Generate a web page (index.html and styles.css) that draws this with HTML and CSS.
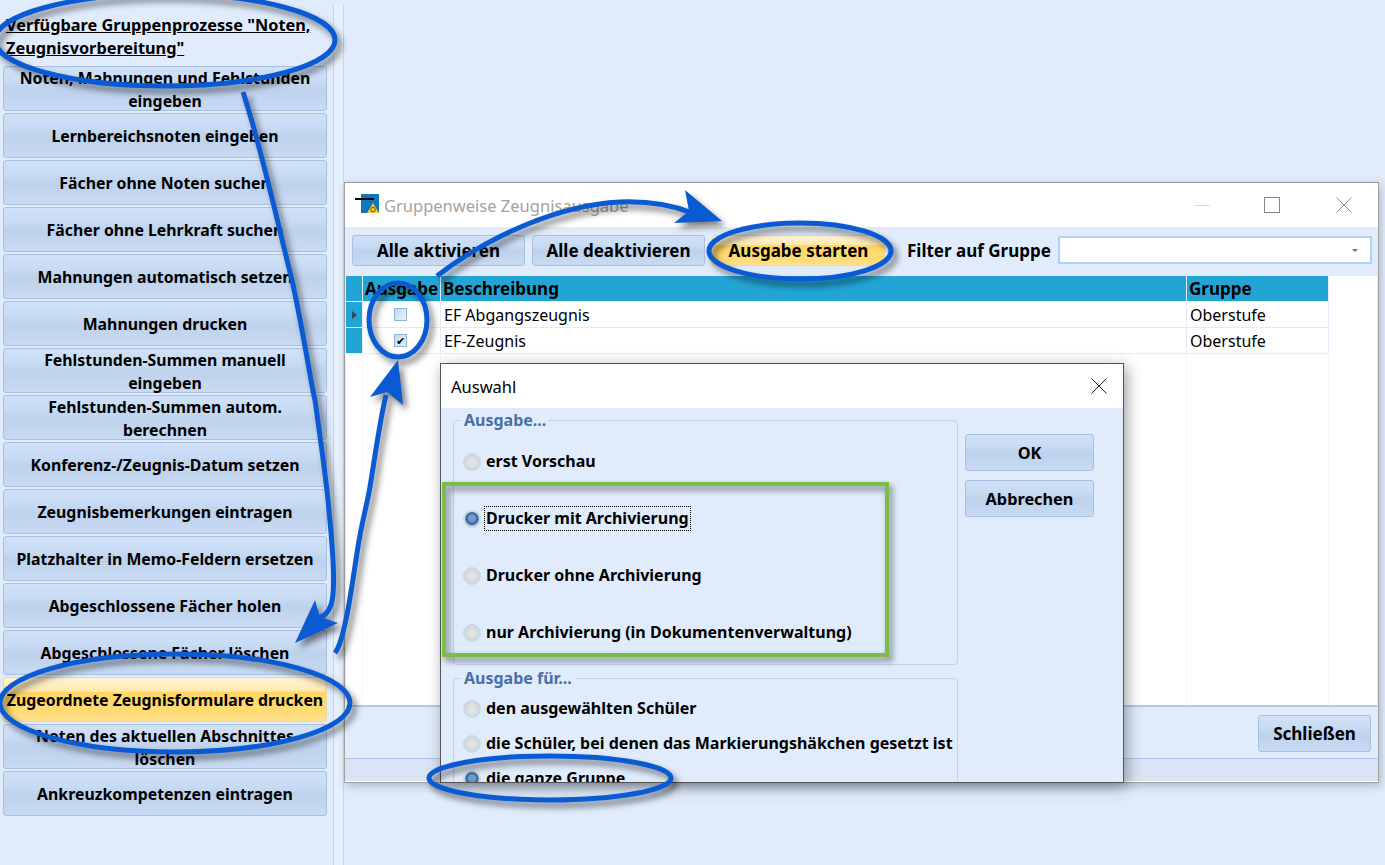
FILE: index.html
```html
<!DOCTYPE html>
<html lang="de">
<head>
  <meta charset="UTF-8">
  <title>Gruppenweise Zeugnisausgabe</title>
  <link rel="stylesheet" href="styles.css">
</head>
<body>

  <aside class="sidebar">
    <h2 class="side-title">Verfügbare Gruppenprozesse "Noten, Zeugnisvorbereitung"</h2>
    <div class="side-list">
      <button class="btn side-btn two-line">Noten, Mahnungen und Fehlstunden<br>eingeben</button>
      <button class="btn side-btn">Lernbereichsnoten eingeben</button>
      <button class="btn side-btn">Fächer ohne Noten suchen</button>
      <button class="btn side-btn">Fächer ohne Lehrkraft suchen</button>
      <button class="btn side-btn">Mahnungen automatisch setzen</button>
      <button class="btn side-btn">Mahnungen drucken</button>
      <button class="btn side-btn two-line">Fehlstunden-Summen manuell<br>eingeben</button>
      <button class="btn side-btn two-line">Fehlstunden-Summen autom.<br>berechnen</button>
      <button class="btn side-btn">Konferenz-/Zeugnis-Datum setzen</button>
      <button class="btn side-btn">Zeugnisbemerkungen eintragen</button>
      <button class="btn side-btn">Platzhalter in Memo-Feldern ersetzen</button>
      <button class="btn side-btn">Abgeschlossene Fächer holen</button>
      <button class="btn side-btn">Abgeschlossene Fächer löschen</button>
      <button class="btn side-btn active">Zugeordnete Zeugnisformulare drucken</button>
      <button class="btn side-btn two-line">Noten des aktuellen Abschnittes<br>löschen</button>
      <button class="btn side-btn">Ankreuzkompetenzen eintragen</button>
    </div>
  </aside>
  <div class="splitter"></div>

  <!-- Hauptfenster -->
  <section class="window">
    <header class="win-title">
      <svg class="win-icon" width="25" height="24" viewBox="0 0 25 24">
        <rect x="6" y="1" width="18" height="19" fill="#0e76bd"/>
        <rect x="0" y="5" width="19" height="2" fill="#000"/>
        <path d="M18 10 L24 20 L12 20 Z" fill="#f7c531"/>
        <circle cx="18" cy="16.5" r="2.2" fill="none" stroke="#7a5a10" stroke-width="1"/>
      </svg>
      <span class="win-name">Gruppenweise Zeugnisausgabe</span>
      <div class="win-controls">
        <span class="ctl-min"></span>
        <span class="ctl-max"></span>
        <svg class="ctl-close" width="16" height="16" viewBox="0 0 16 16">
          <path d="M0.5 0.5 L15.5 15.5 M15.5 0.5 L0.5 15.5" stroke="#8a8a8a" stroke-width="1" fill="none"/>
        </svg>
      </div>
    </header>

    <div class="toolbar">
      <button class="btn tool-btn">Alle aktivieren</button>
      <button class="btn tool-btn">Alle deaktivieren</button>
      <button class="btn tool-btn active">Ausgabe starten</button>
      <label class="filter-label">Filter auf Gruppe</label>
      <div class="combo"><span class="combo-arrow"></span></div>
    </div>

    <div class="grid-wrap">
      <div class="grid">
        <div class="cell head ind"></div>
        <div class="cell head check-head">Ausgabe</div>
        <div class="cell head">Beschreibung</div>
        <div class="cell head">Gruppe</div>

        <div class="cell ind"><span class="row-arrow"></span></div>
        <div class="cell check-cell"><span class="checkbox"></span></div>
        <div class="cell">EF Abgangszeugnis</div>
        <div class="cell">Oberstufe</div>

        <div class="cell ind"></div>
        <div class="cell check-cell"><span class="checkbox">✔</span></div>
        <div class="cell">EF-Zeugnis</div>
        <div class="cell">Oberstufe</div>

        <div class="cell blank"></div>
        <div class="cell blank"></div>
        <div class="cell blank"></div>
        <div class="cell blank"></div>
      </div>
    </div>

    <div class="win-footer">
      <button class="btn close-btn">Schließen</button>
    </div>
    <div class="statusbar"></div>
  </section>

  <!-- Dialog -->
  <section class="dialog">
    <header class="dlg-title">
      <span>Auswahl</span>
      <svg width="16" height="16" viewBox="0 0 16 16">
        <path d="M0.5 0.5 L15.5 15.5 M15.5 0.5 L0.5 15.5" stroke="#222" stroke-width="1" fill="none"/>
      </svg>
    </header>
    <div class="dlg-body">
      <div class="dlg-groups">
        <fieldset class="group group-a">
          <legend>Ausgabe...</legend>
          <div class="radio-row"><span class="radio"></span><span class="radio-text">erst Vorschau</span></div>
          <div class="radio-row"><span class="radio on"></span><span class="radio-text focus">Drucker mit Archivierung</span></div>
          <div class="radio-row"><span class="radio"></span><span class="radio-text">Drucker ohne Archivierung</span></div>
          <div class="radio-row"><span class="radio"></span><span class="radio-text">nur Archivierung (in Dokumentenverwaltung)</span></div>
        </fieldset>
        <fieldset class="group group-b">
          <legend>Ausgabe für...</legend>
          <div class="radio-row"><span class="radio"></span><span class="radio-text">den ausgewählten Schüler</span></div>
          <div class="radio-row"><span class="radio"></span><span class="radio-text">die Schüler, bei denen das Markierungshäkchen gesetzt ist</span></div>
          <div class="radio-row"><span class="radio on"></span><span class="radio-text">die ganze Gruppe</span></div>
        </fieldset>
      </div>
      <div class="dlg-buttons">
        <button class="btn dlg-btn">OK</button>
        <button class="btn dlg-btn">Abbrechen</button>
      </div>
    </div>
  </section>

  <!-- Anmerkungen ueber dem Screenshot -->
  <svg class="marks" width="1385" height="865" viewBox="0 0 1385 865">
    <g class="mark-green">
      <rect x="444" y="484" width="443" height="171"/>
    </g>
    <g class="mark-blue">
      <ellipse cx="165" cy="40" rx="170" ry="46"/>
      <ellipse cx="175" cy="703" rx="175" ry="49"/>
      <ellipse cx="800" cy="251" rx="91" ry="28"/>
      <ellipse cx="398" cy="320" rx="29" ry="37"/>
      <ellipse cx="550" cy="778" rx="121" ry="22"/>
      <path d="M243 92 C262 150 278 225 292 280 C305 340 312 390 315 400 C322 450 326 480 328 500 C333 550 336 590 331 605 C328 613 324 617 318 618"/>
      <path d="M335 653 C345 640 352 585 357 553 C362 520 366 510 370 487 C376 450 380 420 386 395"/>
      <path d="M437 276 C490 235 560 205 620 202 C650 201 672 205 692 213"/>
      <path class="head" d="M295 643 L315 600 L320 617 L338 623 Z"/>
      <path class="head" d="M398 360 L370 397 L387 392 L403 405 Z"/>
      <path class="head" d="M722 221 L685 190 L689 211 L674 223 Z"/>
    </g>
  </svg>

</body>
</html>
```

FILE: styles.css
```css
html, body {
  margin: 0;
  height: 865px;
  overflow: hidden;
}

body {
  position: relative;
  display: flex;
  background: #e0ecfb;
  font-family: 'Noto Sans', sans-serif;
  font-size: 16px;
  color: #000;
}

.btn {
  display: block;
  margin: 0;
  padding: 0;
  border: 1px solid #a9c0e2;
  border-radius: 3px;
  font-family: inherit;
  font-size: 17px;
  font-weight: bold;
  line-height: 23px;
  color: #000;
  background: linear-gradient(#d0e1f7 0%, #c9dcf5 30%, #bfd2ec 52%, #c0d3ed 62%, #c9dbf3 100%);
}

.btn.active {
  border-color: #e8d9a8;
  background: linear-gradient(#fff5d6 0%, #ffe8ab 31%, #ffd662 33%, #ffdb76 80%, #ffe28f 100%);
}

/* Seitenleiste */
.sidebar {
  box-sizing: border-box;
  flex: none;
  width: 333px;
  height: 865px;
  padding: 14px 6px 0 3px;
}

.splitter {
  box-sizing: border-box;
  flex: none;
  width: 11px;
  height: 861px;
  margin-top: 4px;
  border-left: 1px solid #c3d6ee;
  border-right: 1px solid #c3d6ee;
  background: #e6f0fc;
}

.side-title {
  margin: 0 0 6px 3px;
  font-size: 16.3px;
  line-height: 23px;
  font-weight: bold;
  text-decoration: underline;
}

.side-list {
  display: flex;
  flex-direction: column;
  gap: 2px;
}

.side-btn {
  box-sizing: border-box;
  width: 324px;
  height: 45px;
  padding-top: 1px;
  font-size: 15.85px;
  white-space: nowrap;
}

.side-btn.two-line {
  padding-top: 0;
  padding-bottom: 1px;
}

/* Hauptfenster */
.window {
  position: absolute;
  left: 344px;
  top: 182px;
  box-sizing: border-box;
  width: 1035px;
  height: 601px;
  display: flex;
  flex-direction: column;
  border: 1px solid #a0a0a0;
  border-top-color: #999;
  background: #e0ecfb;
  box-shadow: 2px 3px 8px rgba(60, 70, 90, 0.3);
}

.win-title {
  height: 44px;
  flex: none;
  display: flex;
  align-items: center;
  padding-left: 10px;
  background: #fff;
}

.win-icon {
  margin-right: 4px;
}

.win-name {
  font-size: 16.5px;
  color: #a3a3a3;
}

.win-controls {
  margin-left: auto;
  display: flex;
  align-items: center;
  padding-right: 26px;
}

.ctl-min {
  width: 15px;
  height: 1px;
  background: #d9d9d9;
  margin-right: 54px;
}

.ctl-max {
  width: 14px;
  height: 14px;
  border: 1px solid #888;
  margin-right: 56px;
}

.toolbar {
  box-sizing: border-box;
  height: 49px;
  flex: none;
  display: flex;
  align-items: flex-start;
  padding: 8px 6px 0 7px;
  gap: 7px;
}

.tool-btn {
  box-sizing: border-box;
  width: 173px;
  height: 31px;
}

.filter-label {
  margin: 0 0 0 15px;
  font-size: 17px;
  line-height: 31px;
  font-weight: bold;
  white-space: nowrap;
}

.combo {
  box-sizing: border-box;
  flex: 1;
  height: 28px;
  margin-top: 1px;
  border: 2px solid #b0d4f0;
  background: #fff;
  position: relative;
}

.combo-arrow {
  position: absolute;
  right: 12px;
  top: 11px;
  border-left: 3px solid transparent;
  border-right: 3px solid transparent;
  border-top: 3px solid #4a76b8;
}

.grid-wrap {
  flex: 1;
  min-height: 0;
  margin: 0 1px;
  background: #fff;
  border-bottom: 2px solid #a9cde9;
}

.grid {
  display: grid;
  grid-template-columns: 17px 78px 746px 142px;
  grid-template-rows: 26px 26px 26px 1fr;
  height: 100%;
  width: 983px;
}

.cell {
  box-sizing: border-box;
  padding: 0 3px;
  line-height: 26px;
  white-space: nowrap;
  overflow: hidden;
  border-right: 1px solid #e0ecfb;
  border-bottom: 1px solid #e0ecfb;
}

.cell.head {
  padding: 0 2px;
  background: #22a5d5;
  font-weight: bold;
  font-size: 17px;
}

.cell.ind {
  padding: 0;
  background: #22a5d5;
  border-color: #e0ecfb;
  display: flex;
  align-items: center;
  justify-content: center;
}

.cell.blank {
  border-bottom: none;
  border-right-color: #f4f8fd;
}

.check-head {
  padding: 0 0 0 2px;
}

.check-cell {
  display: flex;
  align-items: center;
  justify-content: center;
  padding: 0 2px 0 0;
}

.row-arrow {
  border-top: 4px solid transparent;
  border-bottom: 4px solid transparent;
  border-left: 5px solid #3a4650;
}

.checkbox {
  box-sizing: border-box;
  width: 13px;
  height: 13px;
  border: 1px solid #8fb4dc;
  background: linear-gradient(135deg, #c2daf0, #e8f2fb);
  font-size: 11px;
  line-height: 11px;
  text-align: center;
  color: #000;
}

.win-footer {
  box-sizing: border-box;
  height: 52px;
  flex: none;
  display: flex;
  justify-content: flex-end;
  align-items: flex-start;
  padding: 8px 7px 0 0;
  border-bottom: 1px solid #a9c6e6;
}

.close-btn {
  box-sizing: border-box;
  width: 113px;
  height: 37px;
}

.statusbar {
  height: 22px;
  flex: none;
  background: #d9e5f4;
  border-bottom: 1px solid #fff;
}

/* Dialog */
.dialog {
  position: absolute;
  left: 440px;
  top: 363px;
  box-sizing: border-box;
  width: 684px;
  height: 420px;
  overflow: hidden;
  border: 1px solid #555;
  background: #e0ecfb;
  box-shadow: 3px 4px 14px rgba(40, 40, 50, 0.45);
}

.dlg-title {
  height: 44px;
  display: flex;
  align-items: center;
  justify-content: space-between;
  padding: 0 16px 0 10px;
  background: #fff;
  font-size: 16.5px;
}

.dlg-body {
  display: flex;
  align-items: flex-start;
  padding: 0 0 0 12px;
}

.dlg-groups {
  width: 505px;
}

.group {
  box-sizing: border-box;
  width: 505px;
  margin: 0;
  padding: 0;
  border: 1px solid #c0d3e6;
  border-radius: 4px;
}

.group legend {
  margin-left: 7px;
  padding: 0 3px 0 3px;
  font-size: 16px;
  line-height: 20px;
  font-weight: bold;
  color: #4a6fa5;
}

.group-a {
  height: 255px;
  margin-top: 2px;
  padding-top: 3px;
}

.group-b {
  height: 130px;
  margin-top: 3px;
  padding-top: 3px;
}

.radio-row {
  display: flex;
  align-items: center;
  padding-left: 9px;
}

.group-a .radio-row {
  height: 57px;
}

.group-b .radio-row {
  height: 35px;
}

.radio {
  box-sizing: border-box;
  width: 18px;
  height: 18px;
  margin-right: 3px;
  flex: none;
  border: 2px solid #c8d7ea;
  border-radius: 50%;
  background: radial-gradient(circle, #e6e7e9 0%, #cfd3d8 100%);
}

.radio.on {
  background: radial-gradient(circle at 50% 45%, #6e9bd0 0 30%, #33608f 55%, #b9cbe2 75%);
}

.radio-text {
  font-size: 16px;
  font-weight: bold;
  white-space: nowrap;
  line-height: 23px;
  padding: 0 1px;
  border: 1px solid transparent;
}

.radio-text.focus {
  border: 1px dotted #000;
}

.dlg-buttons {
  display: flex;
  flex-direction: column;
  gap: 9px;
  margin: 26px 0 0 7px;
}

.dlg-btn {
  box-sizing: border-box;
  width: 129px;
  height: 37px;
  padding-top: 1px;
  font-size: 16.3px;
}

/* Anmerkungen */
.marks {
  position: absolute;
  left: 0;
  top: 0;
  pointer-events: none;
}

.mark-blue {
  fill: none;
  stroke: #0a5bd3;
  stroke-width: 5;
  filter: drop-shadow(4px 5px 3px rgba(0, 0, 0, 0.5));
}

.mark-blue .head {
  fill: #0a5bd3;
  stroke: none;
}

.mark-green {
  fill: none;
  stroke: #7cbd45;
  stroke-width: 4;
  filter: drop-shadow(3px 4px 3px rgba(0, 0, 0, 0.5));
}
```
